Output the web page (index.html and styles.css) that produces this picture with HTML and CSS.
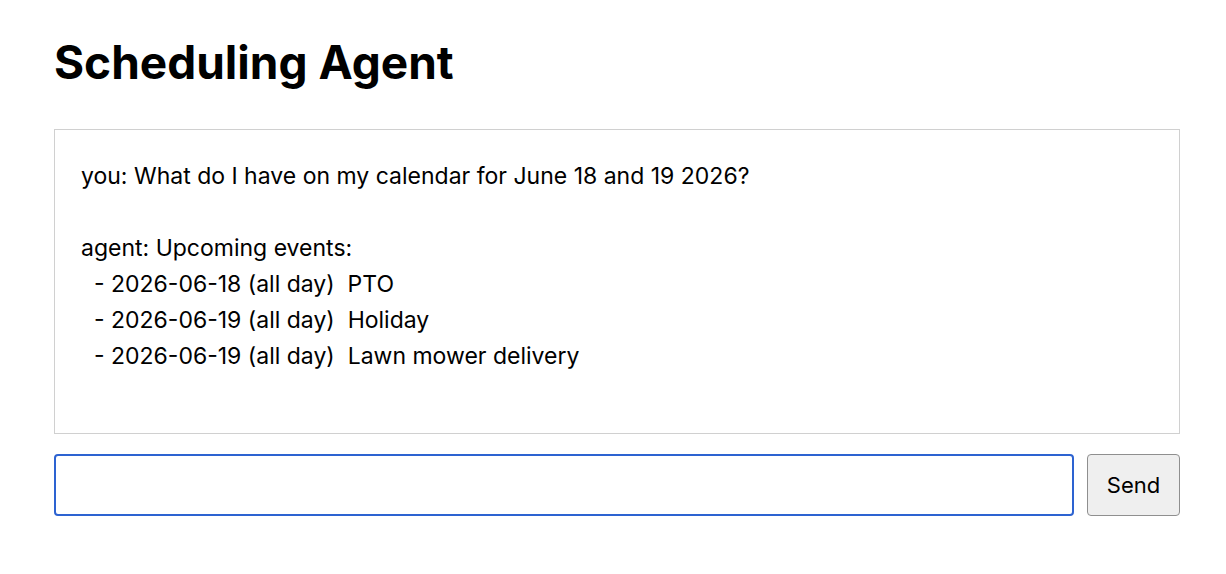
FILE: index.html
```
<!DOCTYPE html>
<html lang="en">

<head>
    <meta charset="UTF-8">
    <meta name="viewport" content="width=device-width, initial-scale=1.0">
    <title>Scheduling Agent</title>
    <link rel="stylesheet" href="styles.css">
</head>

<body>
    <h1>Scheduling Agent</h1>

    <div id="chat-log">you: What do I have on my calendar for June 18 and 19 2026?

agent: Upcoming events:
  - 2026-06-18 (all day)  PTO
  - 2026-06-19 (all day)  Holiday
  - 2026-06-19 (all day)  Lawn mower delivery
</div>

    <form id="chat-form">
        <input type="text" id="message-input">
        <button type="submit" id="send-button">Send</button>
    </form>
</body>

</html>
```

FILE: styles.css
```
body {
    margin: 0;
    padding: 0 46px 0 54px;
    font-family: "Inter", "Liberation Sans", sans-serif;
    font-size: 23px;
    color: #000;
    background: #fff;
}

h1 {
    margin: 35px 0 39px;
    font-size: 46px;
    font-weight: 700;
    line-height: 1.2;
}

/* Лог переписки */
#chat-log {
    box-sizing: border-box;
    height: 305px;
    padding: 28px 26px 24px;
    border: 1px solid #d0d0d0;
    line-height: 36px;
    white-space: pre-wrap;
    overflow-y: auto;
}

#chat-form {
    display: flex;
    gap: 13px;
    margin-top: 20px;
}

#message-input {
    flex: 1;
    box-sizing: border-box;
    height: 62px;
    padding: 0 14px;
    border: 2px solid #2d63d1;
    border-radius: 4px;
    outline: none;
    font-family: inherit;
    font-size: 22px;
}

#send-button {
    box-sizing: border-box;
    width: 93px;
    height: 62px;
    background-color: #efefef;
    border: 1px solid #8f8f8f;
    border-radius: 4px;
    font-family: inherit;
    font-size: 22px;
    color: #000;
    cursor: pointer;
}
```
